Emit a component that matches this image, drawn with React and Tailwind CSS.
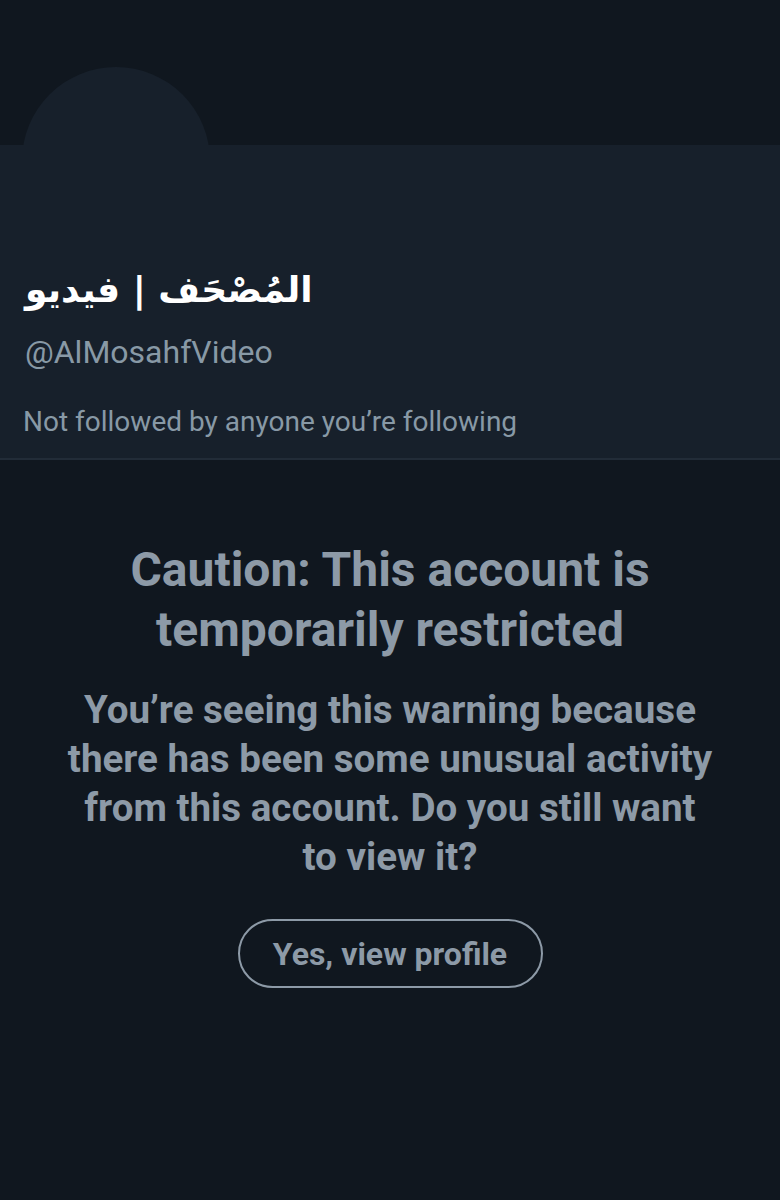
export default function App() {
  return (
    <div
      className="relative w-[780px] h-[1200px] overflow-hidden bg-[#10171f]"
      style={{ fontFamily: 'Roboto, "Liberation Sans", sans-serif' }}
    >
      {/* Banner area */}
      <div className="h-[145px] bg-[#10171f]" />

      {/* Avatar placeholder */}
      <div className="absolute left-[22px] top-[67px] w-[188px] h-[188px] rounded-full bg-[#17202b]" />

      {/* Profile header */}
      <div className="relative bg-[#17202b] border-b-2 border-[#222c38] h-[315px] px-[25px] pt-[123px]">
        <div className="flex">
          <span
            dir="rtl"
            className="text-white font-bold text-[36px] leading-[44px]"
            style={{ fontFamily: '"DejaVu Sans", sans-serif' }}
          >
            المُصْحَف | فيديو
          </span>
        </div>
        <div className="mt-[21px] text-[#8899a6] text-[32px] leading-[38px]">@AlMosahfVideo</div>
        <div className="mt-[34px] -ml-[2px] text-[#8899a6] text-[28px] leading-[34px]">
          Not followed by anyone you’re following
        </div>
      </div>

      {/* Warning */}
      <div className="flex flex-col items-center text-center pt-[80px]">
        <h1 className="text-[#8d9aa7] font-bold text-[48px] leading-[60px]">
          Caution: This account is
          <br />
          temporarily restricted
        </h1>
        <p className="mt-[25px] text-[#8d9aa7] font-bold text-[38.6px] leading-[49px]">
          You’re seeing this warning because
          <br />
          there has been some unusual activity
          <br />
          from this account. Do you still want
          <br />
          to view it?
        </p>
        <button className="mt-[38px] w-[305px] h-[69px] rounded-full border-2 border-[#8d9aa7] text-[#8d9aa7] font-bold text-[32px]">
          Yes, view profile
        </button>
      </div>
    </div>
  )
}
